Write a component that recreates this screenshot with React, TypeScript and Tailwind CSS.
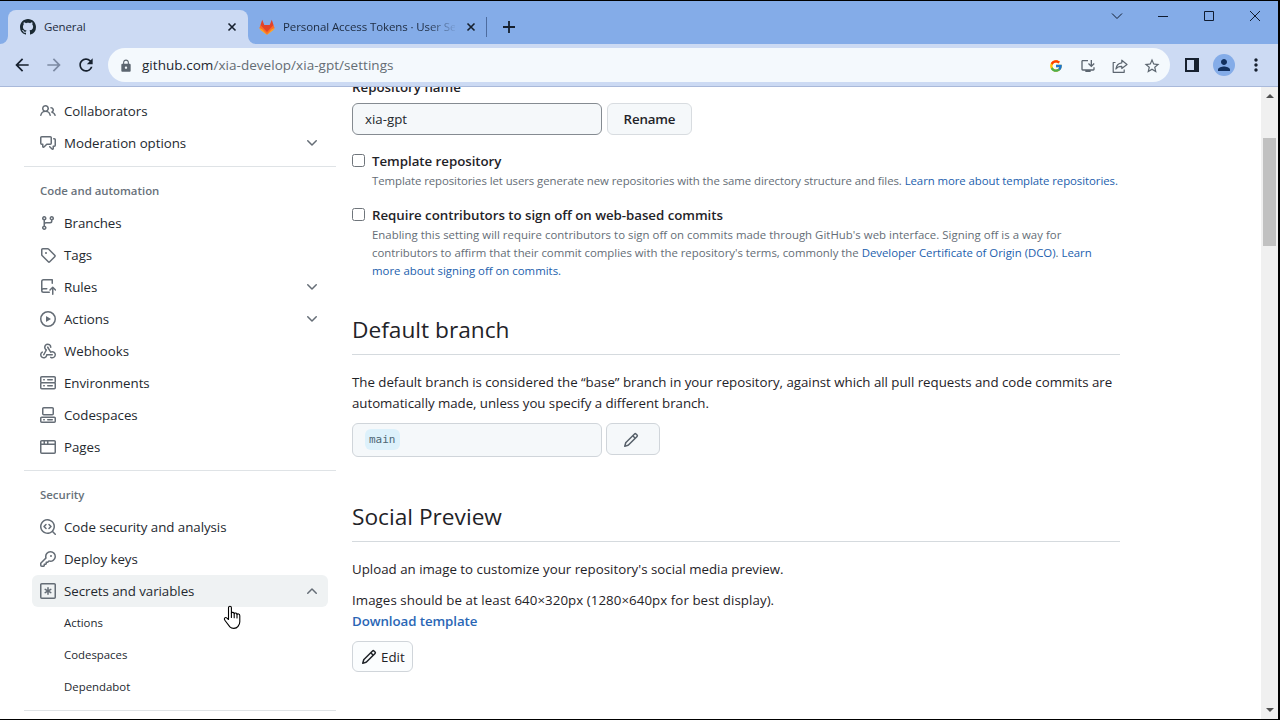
import type { ReactNode } from "react";
import clsx from "clsx";
import { FcGoogle } from "react-icons/fc";
import {
  MdArrowBack,
  MdArrowForward,
  MdLock,
  MdMoreVert,
  MdOutlineInstallDesktop,
  MdPerson,
  MdRefresh,
  MdStarBorder,
} from "react-icons/md";

// 16px octicons, one or more paths each
const icons = {
  mark: [
    "M8 0c4.42 0 8 3.58 8 8a8.013 8.013 0 0 1-5.45 7.59c-.4.08-.55-.17-.55-.38 0-.27.01-1.13.01-2.2 0-.75-.25-1.23-.54-1.48 1.78-.2 3.65-.88 3.65-3.95 0-.88-.31-1.59-.82-2.15.08-.2.36-1.02-.08-2.12 0 0-.67-.22-2.2.82-.64-.18-1.32-.27-2-.27-.68 0-1.36.09-2 .27-1.53-1.03-2.2-.82-2.2-.82-.44 1.1-.16 1.92-.08 2.12-.51.56-.82 1.28-.82 2.15 0 3.06 1.86 3.75 3.64 3.95-.23.2-.44.55-.51 1.07-.46.21-1.61.55-2.33-.66-.15-.24-.6-.83-1.23-.82-.67.01-.27.38.01.53.34.19.73.9.82 1.13.16.45.68 1.31 2.69.94 0 .67.01 1.3.01 1.49 0 .21-.15.45-.55.38A7.995 7.995 0 0 1 0 8c0-4.42 3.58-8 8-8Z",
  ],
  people: [
    "M2 5.5a3.5 3.5 0 1 1 5.898 2.549 5.508 5.508 0 0 1 3.034 4.084.75.75 0 1 1-1.482.235 4 4 0 0 0-7.9 0 .75.75 0 0 1-1.482-.236A5.507 5.507 0 0 1 3.102 8.05 3.493 3.493 0 0 1 2 5.5ZM11 4a3.001 3.001 0 0 1 2.22 5.018 5.01 5.01 0 0 1 2.56 3.012.749.749 0 0 1-.885.954.752.752 0 0 1-.549-.514 3.507 3.507 0 0 0-2.522-2.372.75.75 0 0 1-.574-.73v-.352a.75.75 0 0 1 .416-.672A1.5 1.5 0 0 0 11 5.5.75.75 0 0 1 11 4Zm-5.5-.5a2 2 0 1 0-.001 3.999A2 2 0 0 0 5.5 3.5Z",
  ],
  discussion: [
    "M1.75 1h8.5c.966 0 1.75.784 1.75 1.75v5.5A1.75 1.75 0 0 1 10.25 10H7.061l-2.574 2.573A1.458 1.458 0 0 1 2 11.543V10h-.25A1.75 1.75 0 0 1 0 8.25v-5.5C0 1.784.784 1 1.75 1ZM1.5 2.75v5.5c0 .138.112.25.25.25h1a.75.75 0 0 1 .75.75v2.19l2.72-2.72a.749.749 0 0 1 .53-.22h3.5a.25.25 0 0 0 .25-.25v-5.5a.25.25 0 0 0-.25-.25h-8.5a.25.25 0 0 0-.25.25Zm13 2a.25.25 0 0 0-.25-.25h-.5a.75.75 0 0 1 0-1.5h.5c.966 0 1.75.784 1.75 1.75v5.5A1.75 1.75 0 0 1 14.25 12H14v1.543a1.458 1.458 0 0 1-2.487 1.03L9.22 12.28a.749.749 0 0 1 .326-1.275.749.749 0 0 1 .734.215l2.22 2.22v-2.19a.75.75 0 0 1 .75-.75h1a.25.25 0 0 0 .25-.25Z",
  ],
  branch: [
    "M9.5 3.25a2.25 2.25 0 1 1 3 2.122V6A2.5 2.5 0 0 1 10 8.5H6a1 1 0 0 0-1 1v1.128a2.251 2.251 0 1 1-1.5 0V5.372a2.25 2.25 0 1 1 1.5 0v1.836A2.493 2.493 0 0 1 6 7h4a1 1 0 0 0 1-1v-.628A2.25 2.25 0 0 1 9.5 3.25Zm-6 0a.75.75 0 1 0 1.5 0 .75.75 0 0 0-1.5 0Zm8.25-.75a.75.75 0 1 0 0 1.5.75.75 0 0 0 0-1.5ZM4.25 12a.75.75 0 1 0 0 1.5.75.75 0 0 0 0-1.5Z",
  ],
  tag: [
    "M1 7.775V2.75C1 1.784 1.784 1 2.75 1h5.025c.464 0 .91.184 1.238.513l6.25 6.25a1.75 1.75 0 0 1 0 2.474l-5.026 5.026a1.75 1.75 0 0 1-2.474 0l-6.25-6.25A1.752 1.752 0 0 1 1 7.775Zm1.5 0c0 .066.026.13.073.177l6.25 6.25a.25.25 0 0 0 .354 0l5.025-5.025a.25.25 0 0 0 0-.354l-6.25-6.25a.25.25 0 0 0-.177-.073H2.75a.25.25 0 0 0-.25.25ZM6 5a1 1 0 1 1 0 2 1 1 0 0 1 0-2Z",
  ],
  repoPush: [
    "M1 2.5A2.5 2.5 0 0 1 3.5 0h8.75a.75.75 0 0 1 .75.75v3.5a.75.75 0 0 1-1.5 0V1.5h-8a1 1 0 0 0-1 1v6.708A2.493 2.493 0 0 1 3.5 9h3.25a.75.75 0 0 1 0 1.5H3.5a1 1 0 0 0 0 2h5.75a.75.75 0 0 1 0 1.5H3.5A2.5 2.5 0 0 1 1 11.5Z",
    "M12.75 7.5a.75.75 0 0 0-.53.22l-2.75 2.75a.75.75 0 1 0 1.06 1.06L12 10.06v5.19a.75.75 0 0 0 1.5 0v-5.19l1.47 1.47a.75.75 0 1 0 1.06-1.06l-2.75-2.75a.75.75 0 0 0-.53-.22Z",
  ],
  play: [
    "M8 0a8 8 0 1 1 0 16A8 8 0 0 1 8 0ZM1.5 8a6.5 6.5 0 1 0 13 0 6.5 6.5 0 0 0-13 0Zm4.879-2.773 4.264 2.559a.25.25 0 0 1 0 .428l-4.264 2.559A.25.25 0 0 1 6 10.559V5.442a.25.25 0 0 1 .379-.215Z",
  ],
  webhook: [
    "M5.5 4.25a2.25 2.25 0 0 1 4.5 0 .75.75 0 0 0 1.5 0 3.75 3.75 0 1 0-6.14 2.889l-2.272 4.258a.75.75 0 0 0 1.324.706L7 7.25a.75.75 0 0 0-.309-1.015A2.25 2.25 0 0 1 5.5 4.25Z",
    "M7.364 3.607a.75.75 0 0 1 1.03.257l2.608 4.349a3.75 3.75 0 1 1-.628 6.785.75.75 0 0 1 .752-1.299 2.25 2.25 0 1 0-.033-3.88.75.75 0 0 1-1.03-.256L7.107 4.636a.75.75 0 0 1 .257-1.03Z",
    "M2.9 8.776A.75.75 0 0 1 2.625 9.8 2.25 2.25 0 1 0 6 11.75a.75.75 0 0 1 .75-.751h5.5a.75.75 0 0 1 0 1.5H7.425a3.75 3.75 0 1 1-5.55-3.998.75.75 0 0 1 1.024.274Z",
  ],
  server: [
    "M1.75 1h12.5c.966 0 1.75.784 1.75 1.75v4c0 .372-.116.717-.314 1 .198.283.314.628.314 1v4a1.75 1.75 0 0 1-1.75 1.75H1.75A1.75 1.75 0 0 1 0 12.75v-4c0-.358.109-.707.314-1a1.739 1.739 0 0 1-.314-1v-4C0 1.784.784 1 1.75 1ZM1.5 2.75v4c0 .138.112.25.25.25h12.5a.25.25 0 0 0 .25-.25v-4a.25.25 0 0 0-.25-.25H1.75a.25.25 0 0 0-.25.25Zm.25 5.75a.25.25 0 0 0-.25.25v4c0 .138.112.25.25.25h12.5a.25.25 0 0 0 .25-.25v-4a.25.25 0 0 0-.25-.25ZM7 4.75A.75.75 0 0 1 7.75 4h4.5a.75.75 0 0 1 0 1.5h-4.5A.75.75 0 0 1 7 4.75ZM7.75 10h4.5a.75.75 0 0 1 0 1.5h-4.5a.75.75 0 0 1 0-1.5ZM3 4.75A.75.75 0 0 1 3.75 4h.5a.75.75 0 0 1 0 1.5h-.5A.75.75 0 0 1 3 4.75ZM3.75 10h.5a.75.75 0 0 1 0 1.5h-.5a.75.75 0 0 1 0-1.5Z",
  ],
  codespaces: [
    "M0 11.25c0-.966.784-1.75 1.75-1.75h12.5c.966 0 1.75.784 1.75 1.75v3A1.75 1.75 0 0 1 14.25 16H1.75A1.75 1.75 0 0 1 0 14.25Zm2-9.5C2 .784 2.784 0 3.75 0h8.5C13.216 0 14 .784 14 1.75v5a1.75 1.75 0 0 1-1.75 1.75h-8.5A1.75 1.75 0 0 1 2 6.75Zm1.75-.25a.25.25 0 0 0-.25.25v5c0 .138.112.25.25.25h8.5a.25.25 0 0 0 .25-.25v-5a.25.25 0 0 0-.25-.25Zm-2 9.5a.25.25 0 0 0-.25.25v3c0 .138.112.25.25.25h12.5a.25.25 0 0 0 .25-.25v-3a.25.25 0 0 0-.25-.25Z",
    "M7 12.75a.75.75 0 0 1 .75-.75h4.5a.75.75 0 0 1 0 1.5h-4.5a.75.75 0 0 1-.75-.75Zm-4 0a.75.75 0 0 1 .75-.75h.5a.75.75 0 0 1 0 1.5h-.5a.75.75 0 0 1-.75-.75Z",
  ],
  browser: [
    "M0 2.75C0 1.784.784 1 1.75 1h12.5c.966 0 1.75.784 1.75 1.75v10.5A1.75 1.75 0 0 1 14.25 15H1.75A1.75 1.75 0 0 1 0 13.25ZM14.5 6h-13v7.25c0 .138.112.25.25.25h12.5a.25.25 0 0 0 .25-.25Zm-6-3.5v2h6V2.75a.25.25 0 0 0-.25-.25ZM5 2.5v2h2v-2Zm-3.25 0a.25.25 0 0 0-.25.25V4.5h2v-2Z",
  ],
  codescan: [
    "M8.47 4.97a.75.75 0 0 0 0 1.06L9.94 7.5 8.47 8.97a.75.75 0 1 0 1.06 1.06l2-2a.75.75 0 0 0 0-1.06l-2-2a.75.75 0 0 0-1.06 0ZM6.53 6.03a.75.75 0 0 0-1.06-1.06l-2 2a.75.75 0 0 0 0 1.06l2 2a.75.75 0 1 0 1.06-1.06L5.06 7.5l1.47-1.47Z",
    "M12.246 13.307a7.501 7.501 0 1 1 1.06-1.06l2.474 2.473a.749.749 0 1 1-1.06 1.06l-2.474-2.473ZM1.5 7.5a6.002 6.002 0 0 0 3.608 5.504 6.002 6.002 0 0 0 6.486-1.117.748.748 0 0 1 .292-.293A6 6 0 1 0 1.5 7.5Z",
  ],
  key: [
    "M10.5 0a5.499 5.499 0 1 1-1.288 10.848l-.932.932a.749.749 0 0 1-.53.22H7v.75a.749.749 0 0 1-.22.53l-.5.5a.749.749 0 0 1-.53.22H5v.75a.749.749 0 0 1-.22.53l-.5.5a.749.749 0 0 1-.53.22h-2A1.75 1.75 0 0 1 0 14.25v-2c0-.199.079-.389.22-.53l4.932-4.932A5.5 5.5 0 0 1 10.5 0Zm-4 5.5c-.001.431.069.86.205 1.269a.75.75 0 0 1-.181.768L1.5 12.56v1.69c0 .138.112.25.25.25h1.69l.06-.06v-1.19a.75.75 0 0 1 .75-.75h1.19l.06-.06v-1.19a.75.75 0 0 1 .75-.75h1.19l1.023-1.025a.75.75 0 0 1 .768-.18A4 4 0 1 0 6.5 5.5ZM11 6a1 1 0 1 1 0-2 1 1 0 0 1 0 2Z",
  ],
  asterisk: [
    "M1.75 0h12.5C15.216 0 16 .784 16 1.75v12.5A1.75 1.75 0 0 1 14.25 16H1.75A1.75 1.75 0 0 1 0 14.25V1.75C0 .784.784 0 1.75 0Zm0 1.5a.25.25 0 0 0-.25.25v12.5c0 .138.112.25.25.25h12.5a.25.25 0 0 0 .25-.25V1.75a.25.25 0 0 0-.25-.25Z",
    "M8 4a.75.75 0 0 1 .75.75V6.7l1.69-.975a.75.75 0 0 1 .75 1.3L9.5 8l1.69.976a.75.75 0 0 1-.75 1.298L8.75 9.3v1.951a.75.75 0 0 1-1.5 0V9.299l-1.69.976a.75.75 0 0 1-.75-1.3L6.5 8l-1.69-.975a.75.75 0 0 1 .75-1.3l1.69.976V4.75A.75.75 0 0 1 8 4Z",
  ],
  pencil: [
    "M11.013 1.427a1.75 1.75 0 0 1 2.474 0l1.086 1.086a1.75 1.75 0 0 1 0 2.474l-8.61 8.61c-.21.21-.47.364-.756.445l-3.251.93a.75.75 0 0 1-.927-.928l.929-3.25c.081-.286.235-.547.445-.758l8.61-8.61Zm.176 4.823L9.75 4.81l-6.286 6.287a.253.253 0 0 0-.064.108l-.558 1.953 1.953-.558a.253.253 0 0 0 .108-.064Zm1.238-3.763a.25.25 0 0 0-.354 0L10.811 3.75l1.439 1.44 1.263-1.263a.25.25 0 0 0 0-.354Z",
  ],
  chevron: [
    "M12.78 5.22a.749.749 0 0 1 0 1.06l-4.25 4.25a.749.749 0 0 1-1.06 0L3.22 6.28a.749.749 0 1 1 1.06-1.06L8 8.939l3.72-3.719a.749.749 0 0 1 1.06 0Z",
  ],
};

type IconName = keyof typeof icons;

function Octicon({ name, className = "" }: { name: IconName; className?: string }) {
  return (
    <svg viewBox="0 0 16 16" className={clsx("size-4 shrink-0 fill-current", className)}>
      {icons[name].map((d) => (
        <path key={d} d={d} />
      ))}
    </svg>
  );
}

function TabClose() {
  return (
    <svg viewBox="0 0 10 10" className="size-2.5 shrink-0 stroke-[#16202e]" strokeWidth="1.6">
      <path d="M1.5 1.5 8.5 8.5M8.5 1.5 1.5 8.5" />
    </svg>
  );
}

function TabStrip() {
  return (
    <div className="flex h-[43px] items-end bg-[#84ace8] pl-2 text-[11.5px] text-[#1d2b40]">
      <div className="relative flex h-[34px] w-60 items-center rounded-t-lg bg-[#ccdaf3] pr-[11px] pl-3">
        <Octicon name="mark" className="text-[#1b2a33]" />
        <span className="ml-2 flex-1 tracking-[-0.12px]">General</span>
        <TabClose />
        {/* curved feet of the active tab */}
        <svg viewBox="0 0 8 8" className="absolute bottom-0 -left-2 size-2 fill-[#ccdaf3]">
          <path d="M8 0v8H0a8 8 0 0 0 8-8Z" />
        </svg>
        <svg viewBox="0 0 8 8" className="absolute -right-2 bottom-0 size-2 fill-[#ccdaf3]">
          <path d="M0 0v8h8a8 8 0 0 1-8-8Z" />
        </svg>
      </div>
      <div className="flex h-[34px] items-center pl-[11px]">
        <svg viewBox="0 0 16 16" className="size-4 shrink-0">
          <path d="M.4 9 1.5 6h3.8L8 11.5 10.7 6h3.8l1.1 3L8 15.4Z" fill="#fc6d26" />
          <path d="M1.5 6 3.2.8 5.3 6h5.4L12.8.8 14.5 6 8 13Z" fill="#e24329" />
          <path d="M.4 9.1 3.5 10.5 8 15.4l4.5-4.9 3.1-1.4q0 1.2-1 2L8 16l-6.6-4.9q-1-.8-1-2Z" fill="#fca326" />
        </svg>
        <span className="ml-2 w-[172px] overflow-hidden mask-r-from-[144px] mask-r-to-[175px] tracking-[-0.1px] whitespace-nowrap">
          Personal Access Tokens · User Settings
        </span>
        <span className="ml-[11px] flex">
          <TabClose />
        </span>
        <div className="ml-2.5 h-5 w-px bg-[#4d6c9f]" />
        <svg viewBox="0 0 12 12" className="ml-4 size-3 stroke-[#16202e]" strokeWidth="1.8">
          <path d="M6 0v12M0 6h12" />
        </svg>
      </div>
      <svg
        viewBox="0 0 152 12"
        className="mr-[17px] mb-[22px] ml-auto h-3 w-[152px] fill-none stroke-[#101c30]"
        strokeWidth="1"
      >
        <path d="m3 3.5 5 5 5-5" />
        <path d="M49 6.5h10" />
        <path d="M95.5 1.5h9v9h-9z" />
        <path d="m141 1 10 10M151 1l-10 10" />
      </svg>
    </div>
  );
}

function Toolbar() {
  return (
    <div className="flex h-[43px] items-center border-b border-[#a9b9da] bg-[#ccdaf3] pl-3 text-[#16202e]">
      <MdArrowBack className="size-5" />
      <MdArrowForward className="ml-3 size-5 text-[#7c8aa3]" />
      <MdRefresh className="ml-3 size-5" />
      <div className="ml-3 flex h-[34px] w-[1062px] items-center rounded-full bg-[#f4f9fd] pt-px pr-[9px] pl-[11px] text-[#5c6670]">
        <MdLock className="size-3.5" />
        <p className="ml-[9px] flex-1 text-[13.5px] tracking-[0.04px] text-[#646d74]">
          <span className="text-[#1d262e]">github.com</span>/xia-develop/xia-gpt/settings
        </p>
        <div className="flex items-center">
          <FcGoogle className="size-3.5" />
          <MdOutlineInstallDesktop className="ml-[17px] size-4" />
          <svg
            viewBox="0 0 16 16"
            className="ml-4 size-4 fill-none stroke-current"
            strokeWidth="1.2"
            strokeLinejoin="round"
          >
            <path d="M3.5 4.5H1.2v9.8h11V11.5" />
            <path d="M9.8 2.2 15 6.5l-5.200 4V8.300C7 8.200 5.200 9 3.900 11c.4-3.300 2.300-5.700 5.900-6.200Z" />
          </svg>
          <MdStarBorder className="ml-[15px] size-[18px]" />
        </div>
      </div>
      <svg viewBox="0 0 14 14" className="ml-[15px] size-3.5">
        <path d="M1 1h12v12H1z" fill="none" stroke="#16202e" strokeWidth="2" />
        <path d="M9 1h4v12H9z" fill="#16202e" />
      </svg>
      <div className="ml-3.5 flex size-[22px] items-center justify-center rounded-full bg-[#84ace8]">
        <MdPerson className="size-[18px] text-[#12305e]" />
      </div>
      <MdMoreVert className="ml-[11px] size-5" />
    </div>
  );
}

function NavItem({
  icon,
  children,
  expand,
  active,
}: {
  icon: IconName;
  children: ReactNode;
  expand?: "down" | "up";
  active?: boolean;
}) {
  return (
    <li
      className={clsx(
        "flex h-8 items-center gap-2 rounded-md px-2 text-[13.3px] text-[#24292f]",
        active && "bg-[#eff2f3]",
      )}
    >
      <Octicon name={icon} className="text-[#656d76]" />
      <span className="flex-1 pt-0.5 tracking-[-0.04px]">{children}</span>
      {expand && (
        <Octicon name="chevron" className={clsx("text-[#656d76]", expand === "up" && "rotate-180")} />
      )}
    </li>
  );
}

function SubItem({ children }: { children: ReactNode }) {
  return <li className="flex h-8 items-center pl-8 text-[11.4px] text-[#24292f]">{children}</li>;
}

function NavHeading({ children }: { children: ReactNode }) {
  return (
    <h3 className="mt-[7px] border-t border-[#dfe3e6] px-4 pt-[15px] pb-[7px] text-[11.4px] leading-[18px] font-semibold text-[#68717a]">
      {children}
    </h3>
  );
}

function Sidebar() {
  return (
    <nav className="w-[312px] shrink-0 pt-2">
      <ul className="px-2">
        <NavItem icon="people">Collaborators</NavItem>
        <NavItem icon="discussion" expand="down">
          Moderation options
        </NavItem>
      </ul>
      <NavHeading>Code and automation</NavHeading>
      <ul className="px-2">
        <NavItem icon="branch">Branches</NavItem>
        <NavItem icon="tag">Tags</NavItem>
        <NavItem icon="repoPush" expand="down">
          Rules
        </NavItem>
        <NavItem icon="play" expand="down">
          Actions
        </NavItem>
        <NavItem icon="webhook">Webhooks</NavItem>
        <NavItem icon="server">Environments</NavItem>
        <NavItem icon="codespaces">Codespaces</NavItem>
        <NavItem icon="browser">Pages</NavItem>
      </ul>
      <NavHeading>Security</NavHeading>
      <ul className="px-2">
        <NavItem icon="codescan">Code security and analysis</NavItem>
        <NavItem icon="key">Deploy keys</NavItem>
        <NavItem icon="asterisk" expand="up" active>
          Secrets and variables
        </NavItem>
        <SubItem>Actions</SubItem>
        <SubItem>Codespaces</SubItem>
        <SubItem>Dependabot</SubItem>
      </ul>
      <div className="mt-[7px] border-t border-[#dfe3e6]" />
    </nav>
  );
}

function CheckOption({ label, children }: { label: string; children: ReactNode }) {
  return (
    <div className="flex gap-[7px]">
      <input
        type="checkbox"
        className="mt-[3px] size-[13px] shrink-0 appearance-none rounded-[2.5px] border border-[#6f757b] bg-white"
      />
      <div>
        <label className="block text-[13.3px] leading-[21px] font-semibold tracking-[-0.04px]">{label}</label>
        <p className="text-[11.4px] leading-[18px] whitespace-nowrap text-[#656d76]">{children}</p>
      </div>
    </div>
  );
}

function Link({ children }: { children: ReactNode }) {
  return <a className="text-[#2260ad]">{children}</a>;
}

function SectionTitle({ children }: { children: ReactNode }) {
  return <h2 className="border-b border-[#d5dade] pb-1.5 text-[22.7px] leading-9">{children}</h2>;
}

function Settings() {
  return (
    <main className="-mt-2.5 ml-4 w-[768px] text-[13.3px] leading-[21px] text-[#1f2328]">
      <label className="block font-semibold">Repository name</label>
      <div className="mt-[5px] flex gap-[5px]">
        <input
          defaultValue="xia-gpt"
          className="h-8 w-[250px] rounded-md border border-[#858b91] bg-[#f5f8fa] px-3 text-[#24292f]"
        />
        <button className="h-8 w-[85px] rounded-md border border-[#d8dce0] bg-[#f5f8fa] font-semibold tracking-[-0.15px]">
          Rename
        </button>
      </div>

      <div className="mt-4 flex flex-col gap-[15px]">
        <CheckOption label="Template repository">
          <span className="tracking-[-0.07px]">
            Template repositories let users generate new repositories with the same directory structure and files.{" "}
            <Link>Learn more about template repositories.</Link>
          </span>
        </CheckOption>
        <CheckOption label="Require contributors to sign off on web-based commits">
          <span className="tracking-[0.025px]">
            Enabling this setting will require contributors to sign off on commits made through GitHub's web interface.
            Signing off is a way for
          </span>
          <br />
          <span className="tracking-[-0.018px]">
            contributors to affirm that their commit complies with the repository's terms, commonly the{" "}
            <Link>Developer Certificate of Origin (DCO)</Link>. <Link>Learn</Link>
          </span>
          <br />
          <Link>more about signing off on commits.</Link>
        </CheckOption>
      </div>

      <section className="mt-8">
        <SectionTitle>Default branch</SectionTitle>
        <p className="mt-[17px] tracking-[-0.025px] whitespace-nowrap">
          The default branch is considered the “base” branch in your repository, against which all pull requests and
          code commits are
          <br />
          <span className="tracking-[-0.05px]">automatically made, unless you specify a different branch.</span>
        </p>
        <div className="mt-[9px] flex gap-1">
          <div className="flex h-[34px] w-[250px] items-center rounded-md border border-[#d0d5da] bg-[#f5f8fa] px-3 pb-px">
            <code className="rounded-md bg-[#ddf1fb] px-1 font-['DejaVu_Sans_Mono',monospace] text-[11px] text-[#4d6675]">
              main
            </code>
          </div>
          <button className="flex h-8 w-[54px] items-center justify-center rounded-md border border-[#d0d5da] bg-[#f5f8fa] pt-px pr-1">
            <Octicon name="pencil" className="text-[#57606a]" />
          </button>
        </div>
      </section>

      <section className="mt-[42px]">
        <SectionTitle>Social Preview</SectionTitle>
        <p className="mt-[17px]">Upload an image to customize your repository's social media preview.</p>
        <p className="mt-2.5 tracking-[0.06px]">Images should be at least 640×320px (1280×640px for best display).</p>
        <a className="block font-semibold tracking-[-0.08px] text-[#2a66b5]">Download template</a>
        <button className="mt-[9px] flex h-[31px] w-[61px] items-center gap-1 rounded-md border border-[#d0d5da] bg-[#fbfdfe] pt-px pl-2">
          <Octicon name="pencil" />
          Edit
        </button>
      </section>
    </main>
  );
}

function Scrollbar() {
  return (
    <div className="ml-auto flex w-[17px] flex-col items-center bg-[#f0f0f0]">
      <svg viewBox="0 0 8 4" className="mt-[7px] h-1 w-2 fill-[#505050]">
        <path d="m4 0 4 4H0Z" />
      </svg>
      <div className="mt-10 h-[108px] w-[13px] bg-[#c1c1c1]" />
      <svg viewBox="0 0 8 4" className="mt-auto mb-[7px] h-1 w-2 fill-[#505050]">
        <path d="m0 0h8L4 4Z" />
      </svg>
    </div>
  );
}

function HandCursor() {
  return (
    <svg
      viewBox="0 0 18 24"
      className="absolute top-[604px] left-[223px] h-6 w-[18px] fill-white stroke-black"
      strokeWidth="1.1"
      strokeLinejoin="round"
      strokeLinecap="round"
    >
      <path d="M5.5 14.5V2.8c0-2.1 2.9-2.1 2.9 0v5.4c.4-1.3 2.7-1 2.8.5.5-1.2 2.6-.9 2.8.7.6-1 2.8-.7 2.8 1.3v6c0 2.6-1.3 3.8-2 5-1.700 2.300-6.100 2.200-7.900.2L2 15.500c-1.700-2.300.5-3.800 2-2.300Z" />
      <path d="M8.4 8v4.5M11.2 8.7v4M14 9.5v3.500" />
    </svg>
  );
}

export default function App() {
  return (
    <div className="relative flex h-screen w-screen flex-col overflow-hidden border-t border-r-2 border-b border-black bg-white font-['Open_Sans',sans-serif]">
      <TabStrip />
      <Toolbar />
      <div className="flex min-h-0 flex-1 overflow-hidden pl-6">
        <Sidebar />
        <Settings />
        <Scrollbar />
      </div>
      <HandCursor />
    </div>
  );
}
